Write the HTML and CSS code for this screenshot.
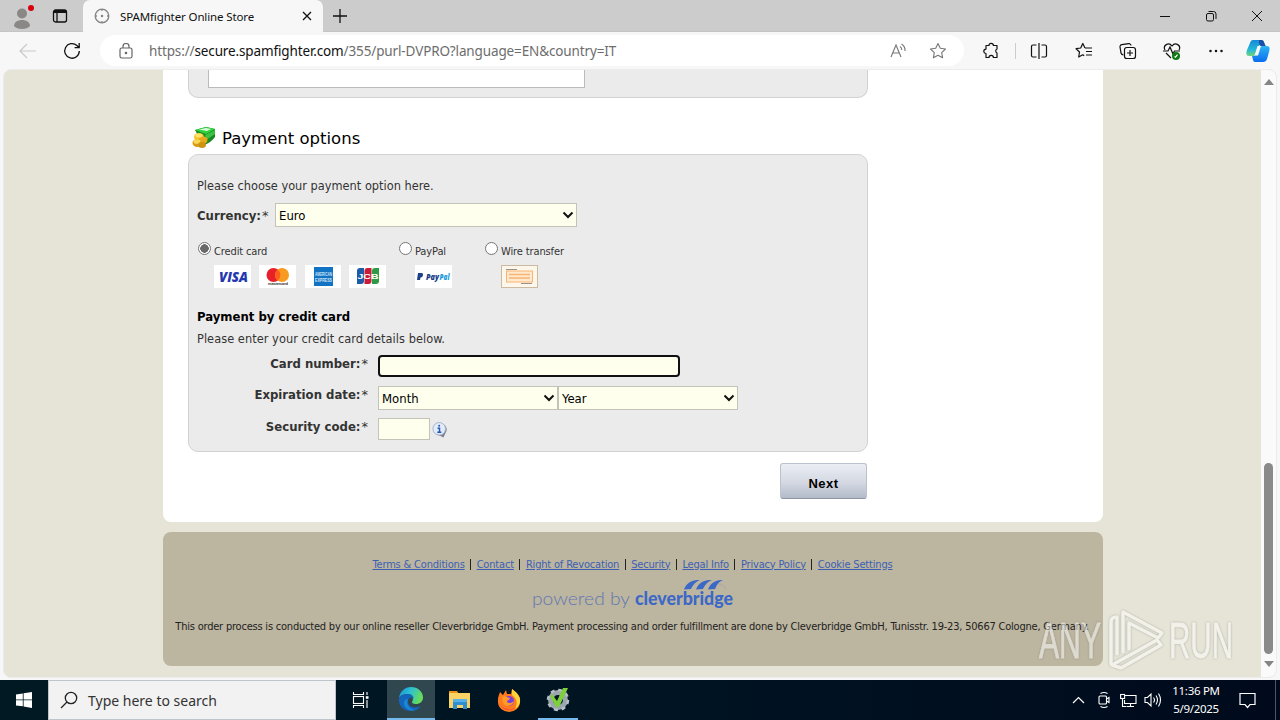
FILE: index.html
```html
<!DOCTYPE html>
<html lang="en">
<head>
  <meta charset="UTF-8">
  <title>SPAMfighter Online Store</title>
  <meta name="viewport" content="width=device-width, initial-scale=1.0">
  <link rel="stylesheet" href="styles.css">
</head>
<body>
  <!-- Tab strip -->
  <header class="tabs">
    <div class="tabs-left">
      <svg class="profile" width="28" height="28" viewBox="0 0 28 28">
        <circle cx="14" cy="9.500" r="5" fill="#8a8886"/>
        <path d="M6 22c0-8 16-8 16 0c-3 4-13 4-16 0z" fill="#8a8886"/>
        <circle cx="23" cy="4" r="3" fill="#d8000f"/>
      </svg>
      <svg class="tab-menu" width="16" height="16" viewBox="0 0 16 16" fill="none" stroke="#111" stroke-width="1.300">
        <rect x="1.500" y="2" width="13" height="12" rx="2"/>
        <path d="M2 3.500h12" stroke-width="3"/>
        <path d="M5 5v9"/>
      </svg>
    </div>
    <div class="tab">
      <svg width="16" height="16" viewBox="0 0 16 16" fill="none" stroke="#858585" stroke-width="1.300">
        <circle cx="8" cy="8" r="6.800"/>
        <path d="M8 1v2M8 13v2M1 8h2M13 8h2"/>
        <circle cx="8" cy="8" r=".6" fill="#858585"/>
      </svg>
      <span class="tab-title">SPAMfighter Online Store</span>
      <svg width="10" height="10" viewBox="0 0 10 10" stroke="#111" stroke-width="1.300"><path d="M1 1l8 8M9 1l-8 8"/></svg>
    </div>
    <svg class="new-tab" width="14" height="14" viewBox="0 0 14 14" stroke="#111" stroke-width="1.300"><path d="M0 7h14M7 0v14"/></svg>
    <div class="window-buttons">
      <svg width="12" height="12" viewBox="0 0 12 12" stroke="#111"><path d="M1 6.500h10"/></svg>
      <svg width="12" height="12" viewBox="0 0 12 12" fill="none" stroke="#111"><rect x="1.500" y="3.500" width="7" height="7.500" rx="1.500"/><path d="M3.500 1.500h5a2.500 2.500 0 0 1 2.500 2.500v5"/></svg>
      <svg width="12" height="12" viewBox="0 0 12 12" stroke="#111"><path d="M1 1l10 10M11 1L1 11"/></svg>
    </div>
  </header>

  <!-- Toolbar -->
  <nav class="toolbar">
    <svg class="back" width="18" height="16" viewBox="0 0 18 16" fill="none" stroke="#c9c9c9" stroke-width="1.200"><path d="M17 8H1M8 1L1 8l7 7"/></svg>
    <svg class="reload" width="18" height="18" viewBox="0 0 18 18" fill="none" stroke="#111" stroke-width="1.300"><path d="M16.300 9A7.300 7.300 0 1 1 13.900 3.500L16 5.500M16.200 1v4.700h-4.600"/></svg>
    <div class="address">
      <svg class="lock" width="14" height="16" viewBox="0 0 14 16" fill="none" stroke="#666" stroke-width="1.200"><rect x="1" y="5" width="12" height="10" rx="1.800"/><path d="M4 5V3.500a3 3 0 0 1 6 0V5"/><circle cx="7" cy="10" r=".7" fill="#666"/></svg>
      <span class="url">https://<b>secure.spamfighter.com</b>/355/purl-DVPRO?language=EN&amp;country=IT</span>
      <svg class="read" width="17" height="16" viewBox="0 0 17 16" fill="none" stroke="#777" stroke-width="1.100"><path d="M1 14L6 2l5 12M2.700 10h6.600M10 3.500c1.300.8 1.800 2 1.800 3.500M11.500 1c2.500 1.500 3.700 4 3.500 7"/></svg>
      <svg width="18" height="18" viewBox="0 0 18 18" fill="none" stroke="#777" stroke-width="1.100" stroke-linejoin="round"><path d="M9 1.500l2.300 4.800 5.200.7-3.800 3.600.9 5.200L9 13.300l-4.600 2.500.9-5.200L1.500 7l5.200-.7z"/></svg>
    </div>
    <div class="tools">
      <svg width="18" height="18" viewBox="0 0 18 18" fill="none" stroke="#111" stroke-width="1.200" stroke-linejoin="round"><path d="M4 3.500h3a2.200 2.200 0 0 1 4.400 0h3.600V7a2.200 2.200 0 0 0 0 4v4.500h-3.600a2.200 2.200 0 0 0-4.400 0H4V11.500a2.200 2.200 0 0 1 0-4.400z"/></svg>
      <i class="divider"></i>
      <svg width="18" height="18" viewBox="0 0 18 18" fill="none" stroke="#111" stroke-width="1.200"><path d="M6.500 3H3a1.500 1.500 0 0 0-1.500 1.500v9A1.500 1.500 0 0 0 3 15h3.500M11.500 3H15a1.500 1.500 0 0 1 1.500 1.500v9A1.500 1.500 0 0 1 15 15h-3.500M9 1v16"/></svg>
      <svg width="18" height="18" viewBox="0 0 18 18" fill="none" stroke="#111" stroke-width="1.200" stroke-linejoin="round"><path d="M10 6L7.800 1.500 5.700 6l-4.600.7L4.500 10l-.8 5 4-2.200 1.500.8M10 6h7M11 9.500h6M11 13h6"/></svg>
      <svg width="18" height="18" viewBox="0 0 18 18" fill="none" stroke="#111" stroke-width="1.200"><path d="M4.500 13A3 3 0 0 1 2 11L1 5a2 2 0 0 1 1.700-2.300l7-1A2 2 0 0 1 12 3.500"/><rect x="5.500" y="5.500" width="11" height="11" rx="2.300"/><path d="M11 8v6M8 11h6"/></svg>
      <svg width="18" height="18" viewBox="0 0 18 18" fill="none" stroke="#111" stroke-width="1.200"><path d="M2 8C-.5 3.500 5.500-.5 9 4c3.500-4.500 9.500-.5 7 4M0 9h5l2-4 3 7 1.500-3H17M3 11l5 5"/><circle cx="13" cy="14" r="4" fill="#117a16" stroke="none"/><path d="M11.500 14.500l1 .7 2-2.500" stroke="#fff"/></svg>
      <svg width="18" height="18" viewBox="0 0 18 18" fill="#111"><circle cx="3.500" cy="9" r="1.250"/><circle cx="9" cy="9" r="1.250"/><circle cx="14.500" cy="9" r="1.250"/></svg>
      <svg class="copilot" width="24" height="24" viewBox="0 0 24 24">
        <defs>
          <linearGradient id="cpA" x1="0" y1="0" x2="0" y2="1"><stop offset="0" stop-color="#1588d8"/><stop offset=".6" stop-color="#22b8d8"/><stop offset="1" stop-color="#6fd67a"/></linearGradient>
          <linearGradient id="cpB" x1="0" y1="0" x2="0" y2="1"><stop offset="0" stop-color="#2bb5f5"/><stop offset="1" stop-color="#0a6cf0"/></linearGradient>
        </defs>
        <path d="M7 1h8c3 0 3 3 4 6l-5-1c-3 0-3 9-6 11H3c-3 0-3-3-2-6L4 4c.600-2 1.500-3 3-3z" fill="url(#cpA)"/>
        <path d="M13 1h2.500c3 0 3 5 4.500 6h-5c-2 0-2-4-2-6z" fill="#1a50a8"/>
        <path d="M16 7h5c3 0 3 3 2 6l-2 7c-.600 2-2 3-4 3H9c-2 0-2-3-3-6h2c3 0 3-10 8-10z" fill="url(#cpB)"/>
        <path d="M11.500 7h3.500l-3 9.500H8.500z" fill="#f7f7f7"/>
      </svg>
    </div>
  </nav>

  <!-- Page -->
  <div class="window">
    <div class="page">
      <main class="content">
        <section class="box box-previous"><div class="comment"></div></section>

        <h2>
          <svg width="24" height="24" viewBox="0 0 24 24">
            <path d="M3 4L14 1l9 2v8c-3 4-7 7-12 8z" fill="#178a22"/>
            <path d="M3 4L14 1l9 2-9 5z" fill="#2fd43c"/>
            <path d="M7 3.500l7-1.500 5 1-4 2z" fill="#dff5e0"/>
            <path d="M13 9l10-5v4l-9 6z" fill="#3fbf43"/>
            <ellipse cx="7" cy="11" rx="5" ry="4" fill="#f5c52b"/>
            <ellipse cx="11" cy="14" rx="4.500" ry="3.500" fill="#e9a91a"/>
            <ellipse cx="5" cy="17" rx="4.500" ry="4" fill="#dc9d16"/>
            <ellipse cx="5" cy="15.500" rx="3.500" ry="2.300" fill="#fad957"/>
            <ellipse cx="10" cy="19" rx="4" ry="3" fill="#cf9314"/>
            <ellipse cx="7" cy="9.500" rx="3.500" ry="2" fill="#ffe06a"/>
          </svg>
          <span>Payment options</span>
        </h2>

        <section class="box">
          <p class="hint">Please choose your payment option here.</p>
          <div class="currency">
            <label>Currency:<em>*</em></label>
            <div class="select">Euro<svg width="12" height="8" viewBox="0 0 12 8"><path d="M1.500 1.500L6 6l4.500-4.500"/></svg></div>
          </div>

          <div class="methods">
            <div class="method method-card">
              <label><i class="radio checked"></i><span>Credit card</span></label>
              <div class="logos">
                <svg width="37" height="23" viewBox="0 0 37 23"><rect width="37" height="23" fill="#fff"/><text x="5" y="17" textLength="29" lengthAdjust="spacingAndGlyphs" class="visa">VISA</text></svg>
                <svg width="37" height="23" viewBox="0 0 37 23"><rect width="37" height="23" fill="#fff"/><circle cx="14.500" cy="10" r="7" fill="#e8202a"/><circle cx="23" cy="10" r="7" fill="#f79a1f"/><path d="M18.750 4.500a7 7 0 0 1 0 11a7 7 0 0 1 0-11z" fill="#fb5f1b"/><text x="9" y="20.300" textLength="20" class="mc">mastercard</text></svg>
                <svg class="amex" width="36" height="23" viewBox="0 0 36 23"><rect width="36" height="23" fill="#fff"/><rect x="9" y="2" width="19" height="19" fill="#1272c4"/><text x="10" y="11" textLength="17" lengthAdjust="spacingAndGlyphs" class="ax">AMERICAN</text><text x="10" y="16.500" textLength="17" lengthAdjust="spacingAndGlyphs" class="ax">EXPRESS</text></svg>
                <svg width="37" height="23" viewBox="0 0 37 23"><rect width="37" height="23" fill="#fff"/><path d="M11 3h4v13q0 3-3 3H8V6q0-3 3-3z" fill="#1b5ba8"/><path d="M18.500 3h4v13q0 3-3 3h-4V6q0-3 3-3z" fill="#c81c38"/><path d="M26 3h4v13q0 3-3 3h-4V6q0-3 3-3z" fill="#2d9a45"/><text x="8.500" y="14" textLength="21" lengthAdjust="spacingAndGlyphs" class="jcb">JCB</text></svg>
              </div>
            </div>
            <div class="method method-paypal">
              <label><i class="radio"></i><span>PayPal</span></label>
              <div class="logos">
                <svg width="37" height="23" viewBox="0 0 37 23"><rect width="37" height="23" fill="#fff"/><path d="M3 8h3.500q2 0 1.500 2.300T5.500 12.500L5 15H2z" fill="#1b3f8b"/><text x="11" y="15" textLength="13" lengthAdjust="spacingAndGlyphs" class="pp">Pay</text><text x="24.500" y="15" textLength="10" lengthAdjust="spacingAndGlyphs" class="pp pal">Pal</text></svg>
              </div>
            </div>
            <div class="method">
              <label><i class="radio"></i><span>Wire transfer</span></label>
              <div class="logos">
                <svg width="38" height="23" viewBox="0 0 38 23"><rect x=".5" y=".5" width="36" height="22" fill="#fdf6ea" stroke="#cbb9a2"/><rect x="5.500" y="6" width="26" height="11" fill="#ffe9cf" stroke="#f7b472"/><path d="M8 9.500h21M8 13h21" stroke="#f7b472" stroke-width="1.300"/><path d="M5 4.500h11M20 18.500h11" stroke="#9c9088"/></svg>
              </div>
            </div>
          </div>

          <h3>Payment by credit card</h3>
          <p class="details">Please enter your credit card details below.</p>
          <div class="field">
            <label class="card-label">Card number:<em>*</em></label>
            <div class="input focused"></div>
          </div>
          <div class="field">
            <label>Expiration date:<em>*</em></label>
            <div class="select half">Month<svg width="12" height="8" viewBox="0 0 12 8"><path d="M1.500 1.500L6 6l4.500-4.500"/></svg></div>
            <div class="select half">Year<svg width="12" height="8" viewBox="0 0 12 8"><path d="M1.500 1.500L6 6l4.500-4.500"/></svg></div>
          </div>
          <div class="field">
            <label>Security code:<em>*</em></label>
            <div class="input code"></div>
            <svg class="info" width="16" height="16" viewBox="0 0 16 16"><path d="M8.500 1.500a6 6 0 0 1 5 9.500q-1 2-2 4.500l-4-2A6 6 0 1 1 8.500 1.500z" fill="#7a8094"/><circle cx="7.200" cy="6.800" r="6.300" fill="#e3ebf9" stroke="#a9b3c8"/><path d="M5.500 6.200h2v4M5.300 10.300h4" fill="none" stroke="#2259b8" stroke-width="1.500"/><circle cx="7.200" cy="3.700" r="1" fill="#2259b8"/></svg>
          </div>
        </section>

        <button class="next">Next</button>
      </main>

      <footer class="footer">
        <div class="links">
          <a>Terms &amp; Conditions</a><i></i><a>Contact</a><i></i><a>Right of Revocation</a><i></i><a>Security</a><i></i><a>Legal Info</a><i></i><a>Privacy Policy</a><i></i><a>Cookie Settings</a>
        </div>
        <svg class="cleverbridge" width="204" height="32" viewBox="0 0 204 32">
          <text x="1" y="26" textLength="98" lengthAdjust="spacingAndGlyphs" class="powered">powered by</text>
          <text x="104" y="26" textLength="98" lengthAdjust="spacingAndGlyphs" class="clever">cleverbridge</text>
          <g fill="#3c68c8"><path d="M153 10.500c3-7 7-9.500 16-9.500c-5 2-7 5-9 9z"/><path d="M165 10.500c3-7 7-9.500 16-9.500c-5 2-7 5-9 9z"/><path d="M177 10.500c3-7 7-9.500 15-9.500c-5 2-6 5-8 9z"/></g>
          <path d="M188 5q5 1 7 5" fill="none" stroke="#b0ada3" stroke-width="1.500"/>
        </svg>
        <p>This order process is conducted by our online reseller Cleverbridge GmbH. Payment processing and order fulfillment are done by Cleverbridge GmbH, Tunisstr. 19-23, 50667 Cologne, Germany.</p>
      </footer>
    </div>
    <div class="scrollbar">
      <i class="arrow up"></i>
      <i class="thumb"></i>
      <i class="arrow down"></i>
    </div>
  </div>

  <!-- Taskbar -->
  <div class="taskbar">
    <div class="start"><svg width="16" height="16" viewBox="0 0 16 16" fill="#fff"><path d="M0 2.500l6.800-1v6H0zM7.600 1.300L16 0v7.500H7.600zM0 8.300h6.800v6L0 13.500zM7.600 8.300H16V16l-8.400-1.400z"/></svg></div>
    <div class="search">
      <svg width="18" height="18" viewBox="0 0 18 18" fill="none" stroke="#222" stroke-width="1.300"><circle cx="11" cy="7" r="5.700"/><path d="M7 11l-6 6"/></svg>
      <span>Type here to search</span>
    </div>
    <div class="app task-view"><svg width="18" height="18" viewBox="0 0 18 18" fill="none" stroke="#fff" stroke-width="1.100"><path d="M1.500 1v2.500h10V1M1.500 17v-2.500h10V17M15 1v3M15 9v8"/><rect x="1.500" y="5.500" width="10" height="7"/><path d="M13.800 6.500h2.700" stroke-width="2.600"/></svg></div>
    <div class="app active"><svg width="26" height="26" viewBox="0 0 26 26">
      <defs><linearGradient id="edge" x1="0" y1="0" x2="1" y2=".3"><stop offset="0" stop-color="#1b8fd6"/><stop offset=".5" stop-color="#2cc0d4"/><stop offset="1" stop-color="#66dc5c"/></linearGradient></defs>
      <path d="M1 12C2 5 7 1 13 1c7 0 12 5 12 10.500c0 4-3 6.500-7 6.500c-3 0-5-1-3.500-3C16 12 14 8 10 8c-5 0-8 2-9 4z" fill="url(#edge)"/>
      <path d="M1 12C3 9 6 8 9.500 8c4 0 6 2 6 4.500C13 10 9 13 10 17c1 4 6 6 13 3c-2 3-6 5-10 5C5 25 0 19 1 12z" fill="#1267bd"/>
      <path d="M10 13c-2 5 1 10 7 11c-7 2-12-4-11-8c.500-2 2-3 4-3z" fill="#1a86d4"/>
    </svg></div>
    <div class="app"><svg width="24" height="22" viewBox="0 0 24 22"><path d="M1 2h8l2 3H1z" fill="#e8951c"/><path d="M1 4h21v15H1z" fill="#fbd264"/><path d="M5 10h14v10h-4v-4H9v4H5z" fill="#2f8fd0"/><path d="M5 10h14v3H5z" fill="#58b1e8"/></svg></div>
    <div class="app"><svg width="24" height="24" viewBox="0 0 24 24"><path d="M3 4l3 3 3-5 1 4 4 0 1-5c4 3 9 7 8 13a11 10 0 0 1-22 0C0.500 10 2 7 3 4z" fill="#ff7a1f"/><path d="M15 1c4 3 9 7 8 13c-.500 3-3 6-5 7c3-6 2-10-3-14z" fill="#ffd33a"/><path d="M2 15c3 7 12 9 17 4a11 10 0 0 1-17-4z" fill="#f0364f"/><circle cx="12" cy="13" r="5" fill="#7a3ee0"/><path d="M5 9c3-2 5 1 8 1c0 2-3 2-3 4c2 2 5 1 7-1c-1 5-8 7-11 2z" fill="#ff9a26"/></svg></div>
    <div class="app running"><svg width="26" height="26" viewBox="0 0 26 26"><circle cx="13" cy="14" r="7.500" fill="none" stroke="#9aa5ad" stroke-width="5"/><circle cx="13" cy="14" r="10" fill="none" stroke="#b6c0c6" stroke-width="2.500" stroke-dasharray="4 3.854"/><path d="M7 8l5 7 6-13h5L14 21h-3L5 10z" fill="#7ed03a"/></svg></div>
    <div class="tray">
      <svg width="13" height="8" viewBox="0 0 13 8" fill="none" stroke="#fff" stroke-width="1.200"><path d="M1 7l5.500-5.500L12 7"/></svg>
      <svg class="meet" width="14" height="18" viewBox="0 0 14 18" fill="none" stroke="#fff" stroke-width="1.100"><rect x="2" y="5" width="7.500" height="8" rx="1"/><path d="M9.500 8L12 6.500v5L9.500 10M3.500 2.500q3.500-2 7 0M3.500 15.500q3.500 2 7 0"/></svg>
      <svg class="net" width="17" height="15" viewBox="0 0 17 15" fill="none" stroke="#fff" stroke-width="1.100"><path d="M5 2.500h11v8H4.500V7M7 13.500h7M10.500 10.500v3M2.500 6v7.500h4"/><rect x=".6" y="1.500" width="4" height="4"/></svg>
      <svg class="sound" width="18" height="16" viewBox="0 0 18 16" fill="none" stroke="#fff" stroke-width="1.100"><path d="M1 5.500h2.500L7 2v12L3.500 10.500H1zM9.500 5.500q2 2.500 0 5M12 3.500q3 4.500 0 9M14.500 1.500q4 6.500 0 13"/></svg>
      <div class="clock"><span>11:36 PM</span><span>5/9/2025</span></div>
      <svg class="notice" width="17" height="17" viewBox="0 0 17 17" fill="none" stroke="#fff" stroke-width="1.200"><path d="M1 1.500h15v11h-5L8.500 15.500 6 12.500H1z"/></svg>
      <i class="desktop"></i>
    </div>
  </div>

  <svg class="watermark" width="206" height="66" viewBox="0 0 206 66">
    <g fill="none" stroke="#fff" stroke-width="3.500" stroke-linejoin="round" stroke-linecap="round">
      <path d="M75 56V14q0-5 6-5v37"/>
      <path d="M87 44V4l39 21-4 5-29-15v26"/>
      <path d="M76 57l9 3 40-23-4-5z"/>
    </g>
    <text x="3" y="50" textLength="62" lengthAdjust="spacingAndGlyphs">ANY</text>
    <text x="133" y="50" textLength="64" lengthAdjust="spacingAndGlyphs">RUN</text>
  </svg>
</body>
</html>
```

FILE: styles.css
```css
* {
  box-sizing: border-box;
  margin: 0;
  padding: 0;
}

body {
  width: 1280px;
  height: 720px;
  overflow: hidden;
  display: flex;
  flex-direction: column;
  position: relative;
  background: #f7f7f7;
  color: #333;
  font-family: "DejaVu Sans Condensed", "DejaVu Sans", sans-serif;
  font-size: 12.650px;
}

svg {
  display: block;
  flex: none;
}

i {
  display: block;
  flex: none;
}

/* Tab strip */
.tabs {
  height: 32px;
  background: #ccc;
  display: flex;
  align-items: center;
  flex: none;
  border-bottom: 1px solid #c4c4c4;
  font-family: "Noto Sans", sans-serif;
}

.tabs-left {
  width: 83px;
  display: flex;
  align-items: center;
  padding-left: 8px;
  gap: 16px;
}

.profile {
  margin-top: 4px;
}

.tab {
  width: 240px;
  height: 32px;
  background: #f7f7f7;
  border-radius: 7px 7px 0 0;
  margin-bottom: -1px;
  display: flex;
  align-items: center;
  padding: 0 11px;
}

.tab-title {
  flex: 1;
  margin-left: 10px;
  color: #111;
  font-size: 11.500px;
  letter-spacing: -0.120px;
}

.new-tab {
  margin-left: 10px;
}

.window-buttons {
  margin-left: auto;
  display: flex;
  gap: 34px;
  padding-right: 17px;
}

/* Toolbar */
.toolbar {
  height: 37px;
  flex: none;
  display: flex;
  align-items: center;
  padding-left: 19px;
}

.reload {
  margin-left: 26px;
}

.address {
  width: 864px;
  height: 31px;
  margin-left: 19px;
  border-radius: 16px;
  background: #fff;
  display: flex;
  align-items: center;
  padding: 0 17px 0 19px;
}

.url {
  flex: 1;
  margin-left: 16px;
  color: #6d6d6d;
  font: 13.500px "Noto Sans", sans-serif;
  letter-spacing: -0.130px;
}

.url b {
  color: #111;
  font-weight: 400;
}

.read {
  margin-right: 22px;
}

.tools {
  display: flex;
  align-items: center;
  margin-left: 18px;
  gap: 26.200px;
}

.divider {
  width: 1px;
  height: 16px;
  background: #ccc;
  margin: 0 -12px 0 -11px;
}

.copilot {
  margin-left: -5px;
}

/* Page */
.window {
  height: 609px;
  margin: 0 3px 2px;
  flex: none;
  display: flex;
  background: #e6e4d6;
  border: 1px solid #ececec;
  border-radius: 8px;
  overflow: hidden;
}

.page {
  flex: 1;
  padding-left: 159px;
}

.content {
  width: 940px;
  height: 452px;
  background: #fff;
  border-radius: 0 0 8px 8px;
  padding: 0 25px;
}

.box {
  width: 680px;
  height: 298px;
  background: #ebebeb;
  border: 1px solid #d2d2d2;
  border-radius: 10px;
  padding: 20px 8px 0;
}

.box-previous {
  height: 28px;
  border-top: none;
  border-radius: 0 0 10px 10px;
  padding: 0 19px;
}

.comment {
  width: 377px;
  height: 18px;
  background: #fff;
  border: 1px solid #bbb;
  border-top: none;
}

h2 {
  height: 56px;
  padding: 24px 0 0 4px;
  display: flex;
  align-items: center;
  gap: 6px;
  color: #000;
  font: 400 16.500px "DejaVu Sans", sans-serif;
}

.hint {
  height: 28px;
  line-height: 22px;
}

.currency {
  display: flex;
  align-items: center;
  height: 24px;
}

label {
  font-size: 13px;
  font-weight: 700;
}

label em {
  font: 400 13px "DejaVu Sans", sans-serif;
  margin-left: 1px;
}

.currency label {
  width: 78px;
}

.select {
  width: 302px;
  height: 24px;
  border: 1px solid #c3c3b9;
  background: #ffffee;
  color: #000;
  display: flex;
  align-items: center;
  justify-content: space-between;
  padding: 0 2px 0 3px;
  font-size: 13px;
}

.select path {
  fill: none;
  stroke: #111;
  stroke-width: 2;
}

.select.half {
  width: 180px;
}

.methods {
  display: flex;
  height: 81px;
  padding: 14px 0 0 1px;
}

.method label {
  display: flex;
  align-items: center;
  height: 15px;
  gap: 3px;
  font-size: 11px;
  font-weight: 400;
  letter-spacing: -0.120px;
}

.method label span {
  padding-top: 5px;
}

.method-card {
  width: 201px;
}

.method-paypal {
  width: 86px;
}

.radio {
  width: 13px;
  height: 13px;
  border: 1px solid #767676;
  border-radius: 50%;
  background: #fff;
}

.radio.checked {
  background: radial-gradient(#696969 0 4px, #fff 4.500px);
}

.logos {
  display: flex;
  gap: 8px;
  margin: 9px 0 0 16px;
}

.amex {
  margin-left: 1px;
}

.visa {
  font: italic 800 14px "Open Sans", sans-serif;
  fill: #2338b0;
}

.mc {
  font: 700 4px "Liberation Sans", sans-serif;
  fill: #333;
}

.ax {
  font: 700 5px "Liberation Sans", sans-serif;
  fill: #cfe5f6;
}

.jcb {
  font: 700 8px "Liberation Sans", sans-serif;
  fill: #fff;
}

.pp {
  font: italic 800 8px "Open Sans", sans-serif;
  fill: #1b3f8b;
}

.pal {
  fill: #1f9bdc;
}

h3 {
  height: 20px;
  line-height: 17px;
  color: #000;
  font-size: 13px;
}

.details {
  height: 26px;
  line-height: 22px;
  letter-spacing: 0.050px;
}

.field {
  display: flex;
  height: 32px;
  align-items: flex-start;
}

.field label {
  width: 171px;
  margin-right: 10px;
  line-height: 18px;
  text-align: right;
}

.field .card-label {
  line-height: 20px;
}

.input {
  width: 302px;
  height: 22px;
  background: #ffffee;
  border: 1px solid #c3c3b9;
}

.input.focused {
  border: 2px solid #101010;
  border-radius: 4px;
  margin-top: 1px;
}

.input.code {
  width: 52px;
}

.info {
  margin: 4px 0 0 2px;
}

.next {
  display: block;
  width: 87px;
  height: 36px;
  margin: 11px 0 0 592px;
  padding-top: 4px;
  border: 1px solid #bcc1cb;
  border-bottom-color: #8d96a5;
  border-radius: 3px;
  background: linear-gradient(#eceef5, #d3d8e2 55%, #b3bbc9);
  color: #000;
  font: 700 13px "Liberation Sans", sans-serif;
  letter-spacing: 0.500px;
}

/* Footer */
.footer {
  width: 940px;
  height: 134px;
  margin-top: 10px;
  border-radius: 8px;
  background: #bcb59f;
  padding-top: 24px;
  display: flex;
  flex-direction: column;
  align-items: center;
  color: #222;
  font-size: 11px;
  white-space: nowrap;
}

.footer p {
  margin: 9px 2px 0 0;
  line-height: 13px;
  letter-spacing: -0.210px;
}

.links {
  display: flex;
  align-items: center;
  height: 16px;
  margin: 0 1px 7px 0;
  letter-spacing: -0.180px;
}

.links a {
  color: #3b5fb5;
  text-decoration: underline;
}

.links i {
  width: 1px;
  height: 11px;
  margin: 0 5.500px;
  background: #222;
}

.powered {
  font: 300 18px Lato, sans-serif;
  fill: #6078b4;
}

.clever {
  font: 900 18px Lato, sans-serif;
  fill: #3c68c8;
}

/* Scrollbar */
.scrollbar {
  width: 15px;
  background: #fafafa;
  display: flex;
  flex-direction: column;
  align-items: center;
}

.arrow {
  border: 5px solid transparent;
}

.arrow.up {
  border-top: none;
  border-bottom: 6px solid #858585;
  margin-top: 9px;
}

.thumb {
  width: 9px;
  height: 191px;
  margin-top: 378px;
  border-radius: 5px;
  background: #8a8a8a;
}

.arrow.down {
  border-bottom: none;
  border-top: 6px solid #858585;
  margin-top: 7px;
}

/* Taskbar */
.taskbar {
  height: 40px;
  flex: none;
  display: flex;
  background: linear-gradient(90deg, #001923, #001322 55%, #000a1c);
  color: #fff;
  font-family: "Noto Sans", sans-serif;
}

.start, .app {
  width: 48px;
  display: flex;
  align-items: center;
  justify-content: center;
}

.search {
  width: 288px;
  background: #f2f2f2;
  border: 1px solid #bfc3cb;
  display: flex;
  align-items: center;
  padding-left: 11px;
  gap: 10px;
  color: #333;
  font-size: 14px;
}

.app {
  width: 49px;
}

.app.task-view {
  margin-right: 2px;
}

.app.active {
  width: 48px;
  background: #314750;
}

.app.running {
  width: 40px;
  margin-left: 5px;
}

.app.active, .app.running {
  border-bottom: 2px solid #76b9ed;
}

.tray {
  margin-left: auto;
  display: flex;
  align-items: center;
}

.meet {
  margin-left: 12px;
}

.net {
  margin-left: 9px;
}

.sound {
  margin-left: 7px;
}

.clock {
  width: 62px;
  margin-left: 3px;
  display: flex;
  flex-direction: column;
  align-items: center;
  font-size: 11.500px;
  letter-spacing: -0.300px;
  line-height: 18px;
}

.notice {
  margin-left: 12px;
}

.desktop {
  width: 1px;
  height: 40px;
  margin: 0 4px 0 19px;
  background: #4d5560;
}

/* Watermark lies over page and footer */
.watermark {
  position: absolute;
  left: 1036px;
  top: 608px;
  opacity: 0.5;
  filter: drop-shadow(0 0 1px #777);
}

.watermark text {
  font: 50px "Liberation Sans Narrow", "Liberation Sans", sans-serif;
  fill: #fff;
  stroke: #fff;
  stroke-width: 0.800;
}
```
